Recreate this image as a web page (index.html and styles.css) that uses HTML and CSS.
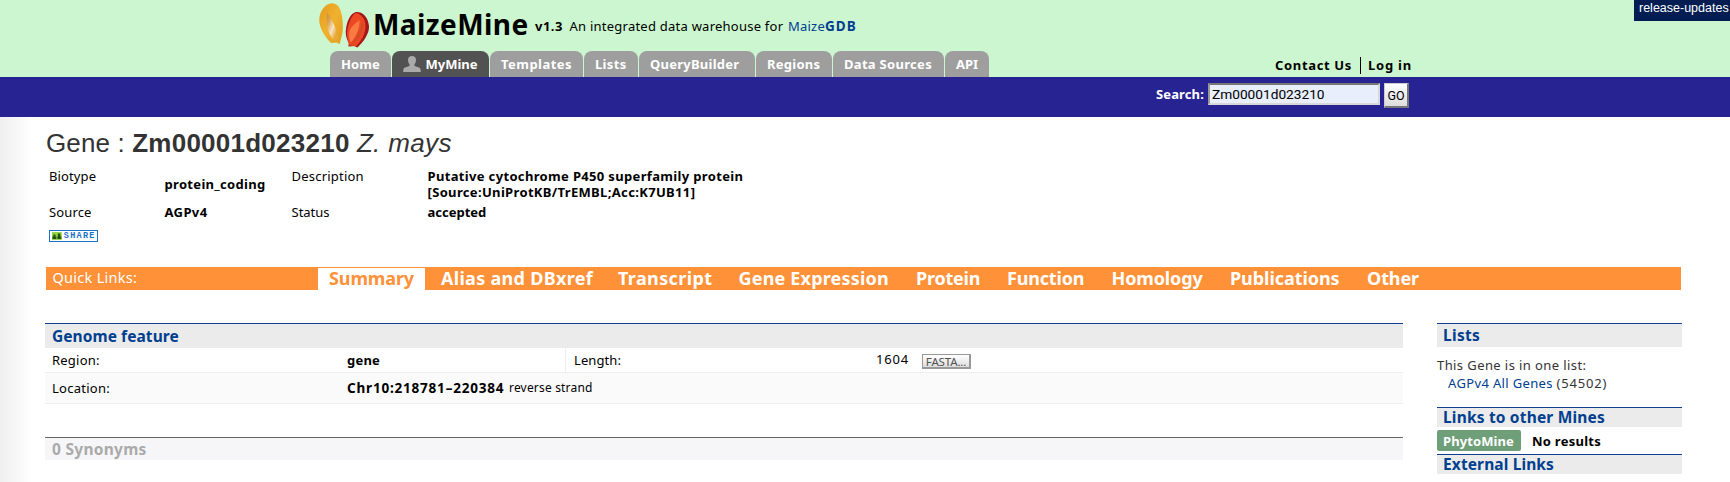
FILE: index.html
```
<!DOCTYPE html>
<html lang="en">
<head>
<meta charset="utf-8">
<title>MaizeMine: Gene Zm00001d023210</title>
<link rel="stylesheet" href="styles.css">
</head>
<body>
<header class="header">
  <div class="brand">
    <svg class="logo" width="52" height="48" viewBox="0 0 52 48">
      <defs>
        <linearGradient id="gold" x1="0" y1="0" x2="1" y2="1"><stop offset="0" stop-color="#e39a1c"/><stop offset=".5" stop-color="#efb22f"/><stop offset="1" stop-color="#e39b1e"/></linearGradient>
        <linearGradient id="shine" x1="0" y1="0" x2="1" y2="1"><stop offset="0" stop-color="#d08c28"/><stop offset=".25" stop-color="#dca250"/><stop offset=".55" stop-color="#f8e4c4"/><stop offset=".8" stop-color="#e8a93a"/></linearGradient>
      </defs>
      <path d="M13 3.3C17 3.3 20.500 6 22 12C24 19 24.500 29 23 35C22.300 38 21.600 40 20.800 44L17.500 42.600L12 43C7 38 2 31 .5 23C-1 14 5 3.500 13 3.300Z" fill="url(#gold)"/>
      <path d="M8 12.500C11 16 18 29 19 37C18.500 40 16.500 41 14.500 40C9 34 6.500 24 8 12.500Z" fill="url(#shine)"/>
      <path d="M37 12C43 11.500 49 16 50 26C50.500 34 44 42 38.500 47.500L35 46L29.500 46.500L29.700 43C27 38 26 33 27.300 27C28.500 20 32 13 37 12Z" fill="#a5161b"/>
      <path d="M37 13C42 14 46.500 19 46.500 26C46.500 34 42 41 37.500 46L30.500 45.500C28 39 27.500 34 28.500 29C30 22 33 14.500 37 13Z" fill="#ee4823"/>
      <path d="M43.500 19C46 28 43 35 36 42L32 44.500C38 37 42 30 43.500 19Z" fill="#cf4c27"/>
      <path d="M40.500 20C41 28 38 35 32 42.500C29.500 38 29.500 32 32 28C35 24 37 23 40.500 20Z" fill="#f97a42"/>
    </svg>
    <h1 class="title">MaizeMine</h1>
    <b class="version">v1.3</b>
    <p class="tagline">An integrated data warehouse for <a class="maize">Maize</a><a class="gdb">GDB</a></p>
  </div>
  <div class="navrow">
    <nav class="tabs">
      <a class="tab home">Home</a>
      <a class="tab mymine"><svg class="user" width="18" height="16" viewBox="0 0 18 16"><path d="M9 0C11.300 0 13 1.500 13 4C13 6 12.300 7.300 11.500 8.200V10L16 11.500C17.300 12 17.800 13 17.800 16H.2C.2 13 .7 12 2 11.500L6.500 10V8.200C5.700 7.300 5 6 5 4C5 1.500 6.700 0 9 0Z" fill="#aaa"/></svg>MyMine</a>
      <a class="tab templates">Templates</a>
      <a class="tab lists-tab">Lists</a>
      <a class="tab query">QueryBuilder</a>
      <a class="tab regions">Regions</a>
      <a class="tab sources">Data Sources</a>
      <a class="tab api">API</a>
    </nav>
    <div class="account"><a class="contact">Contact Us</a><i class="sep"></i><a class="login">Log in</a></div>
  </div>
  <span class="release">release-updates</span>
</header>
<div class="searchbar">
  <label class="search-label">Search:</label>
  <div class="search-input">Zm00001d023210</div>
  <div class="go">GO</div>
</div>
<main class="content">
  <h2 class="gene"><span class="g1">Gene :</span> <b class="g2">Zm00001d023210</b> <i class="g3">Z. mays</i></h2>
  <div class="facts">
    <span class="ls1">Biotype</span><b class="coding">protein_coding</b><span class="ls2">Description</span>
    <b class="desc">Putative cytochrome P450 superfamily protein<br>[Source:UniProtKB/TrEMBL;Acc:K7UB11]</b>
    <span class="ls1">Source</span><b class="ls4">AGPv4</b><span>Status</span><b>accepted</b>
  </div>
  <div class="share"><svg width="10" height="8" viewBox="0 0 10 8"><rect width="10" height="8" fill="#8ed43c"/><path d="M1.500 2.500h2v2h1V7H.5V4.500h1ZM6 1.500h2.500v3h1V7H5.500V4.500H6Z" fill="#27501c"/></svg><span>SHARE</span></div>
  <nav class="quick">
    <span class="ql">Quick Links:</span>
    <a class="q active">Summary</a><a class="q q-alias">Alias and DBxref</a><a class="q q-trans">Transcript</a><a class="q q-expr">Gene Expression</a><a class="q q-prot">Protein</a><a class="q q-func">Function</a><a class="q q-homo">Homology</a><a class="q q-pub">Publications</a><a class="q q-other">Other</a>
  </nav>
  <div class="columns">
    <section class="left">
      <h3 class="head genome">Genome feature</h3>
      <div class="row r1"><span class="k ls2">Region:</span><b class="v ls2">gene</b><span class="len">Length:</span><span class="num">1604</span><span class="fasta">FASTA...</span></div>
      <div class="row r2"><span class="k loc">Location:</span><b class="v chr">Chr10:218781&#8211;220384</b><span class="strand">reverse strand</span></div>
      <h3 class="head syn">0 Synonyms</h3>
    </section>
    <aside class="right">
      <h3 class="head lists">Lists</h3>
      <p class="inlist">This Gene is in one list:</p>
      <p class="agp"><a>AGPv4 All Genes</a> <span>(54502)</span></p>
      <h3 class="head mines">Links to other Mines</h3>
      <div class="phyto"><a class="badge">PhytoMine</a><b class="none">No results</b></div>
      <h3 class="head external">External Links</h3>
    </aside>
  </div>
</main>
</body>
</html>
```
FILE: styles.css
```
*{box-sizing:border-box}
body{margin:0;height:482px;overflow:hidden;background:#fff;color:#000;font:13px/20px "Noto Sans","Open Sans",sans-serif}
h1,h2,h3,p{margin:0;font-weight:normal}
a{color:#00408f;text-decoration:none}
a,b,span,label{white-space:nowrap}

.header{position:relative;height:77px;background:#ccf6cf;display:flex;flex-direction:column}
.brand{height:51px;padding-left:319px;display:flex;align-items:flex-start}
.logo{flex:none;margin-right:1px}
.title{width:163px;padding:4px 0 0 1px;font:bold 28px/40px "Noto Sans",sans-serif;letter-spacing:.42px}
.version{width:34.500px;padding-top:16px;letter-spacing:.5px}
.tagline{padding-top:16px;letter-spacing:.24px;white-space:nowrap}
.maize{margin-left:1px}
.gdb{font-weight:bold;font-size:13.500px;letter-spacing:1px}
.navrow{height:26px;display:flex;padding-left:330px}
.tabs{display:flex;gap:1px;width:945px}
.tab{height:26px;padding-left:11px;border-radius:8px 8px 0 0;background:#9e9e9e;color:#fff;font-weight:bold;line-height:26px;letter-spacing:.25px}
.home{width:61px;letter-spacing:.12px}
.mymine{width:97px;background:#525252;display:flex;letter-spacing:0}
.user{margin:5px 4.500px 0 0}
.templates{width:93px;letter-spacing:.46px}
.lists-tab{width:54px;letter-spacing:.33px}
.query{width:116px}
.regions{width:76px}
.sources{width:111px;letter-spacing:.3px}
.api{width:44px;letter-spacing:0}
.account{display:flex;padding-top:2px;font-weight:bold;line-height:25px}
.account a{color:#000}
.contact{width:85px;letter-spacing:.66px}
.sep{width:1px;height:17px;margin:4px 7px 0 0;background:#000}
.login{letter-spacing:.78px}
.release{position:absolute;top:0;right:0;width:96px;height:21px;padding-left:5px;background:#031d52;color:#fff;font:12.500px/17px "Liberation Sans",Arial,sans-serif}

.searchbar{height:40px;background:#282393;display:flex;padding:6px 0 0 1156px}
.search-label{width:52px;padding-top:1px;color:#fff;font-weight:bold;letter-spacing:.13px}
.search-input{width:172px;height:22px;padding-left:2px;border:2px solid #d8d8d8;border-top-color:#777;border-left-color:#999;background:#e8eefc;font:13.7px/18px Roboto,sans-serif}
.go{width:25px;height:25px;margin-left:4px;border:1px solid #ccc;border-right:2px solid #777;border-bottom:2px solid #777;background:linear-gradient(#fff,#ddd);font:12.500px/24px Roboto,sans-serif;text-align:center}

.content{height:365px;padding-left:45px;background:linear-gradient(90deg,#efefef,#fff 32px)}
.gene{height:49px;padding:11px 0 0 1px;color:#333;font:26px/30px "Liberation Sans",Arial,sans-serif;white-space:nowrap}
.g1{letter-spacing:.15px}
.g2{letter-spacing:.25px}
.g3{letter-spacing:.35px}
.facts{display:grid;grid-template-columns:115.500px 127px 136px auto;grid-template-rows:36px 20px;padding-left:4px;line-height:20px}
.coding{padding-top:8px;letter-spacing:.32px}
.desc{letter-spacing:.34px;line-height:16px;padding-top:2px}
.ls1{letter-spacing:.12px}
.ls2{letter-spacing:.22px}
.ls4{letter-spacing:.38px}
.share{width:49px;height:12px;margin:8px 0 25px 4px;border:1px solid #1c71c9;background:#fff;display:flex;padding:1px 2px}
.share span{margin-left:2px;color:#1c71c9;font:bold 8.500px/9px "Liberation Mono",monospace;letter-spacing:1.300px;width:32px;overflow:hidden}
.quick{width:1635px;height:23px;margin-left:1px;background:#ff9138;color:#fff;display:flex}
.ql{width:272px;padding-left:6.500px;font-size:14.500px;line-height:21px;letter-spacing:.28px}
.q{height:23px;color:#fff;font-weight:bold;font-size:18px;line-height:22px}
.active{width:107px;height:22px;margin:1px 16px 0 0;padding-left:11px;background:#fff;color:#ff9138;line-height:20px;letter-spacing:-.12px}
.q-alias{width:177px;letter-spacing:.3px}
.q-trans{width:120.500px;letter-spacing:.38px}
.q-expr{width:177.500px;letter-spacing:.18px}
.q-prot{width:91px;letter-spacing:-.22px}
.q-func{width:104.500px;letter-spacing:-.18px}
.q-homo{width:118.500px;letter-spacing:-.12px}
.q-pub{width:137px;letter-spacing:-.06px}
.q-other{letter-spacing:-.11px}
.columns{display:flex;gap:34px;padding-top:33px}
.left{width:1358px}
.right{width:245px}
.head{padding-left:7px;border-top:1px solid #11408f;background:#ebebeb;color:#00408f;font-size:15.500px;font-weight:bold}
.genome{height:25px;line-height:24px;letter-spacing:.07px}
.row{display:flex;padding-left:7px;border-bottom:1px solid #ededed}
.r1{height:25px;line-height:25px}
.k{width:295px}
.v{width:162px}
.chr{letter-spacing:.8px;font-size:13.500px}
.r1 .v{width:218px}
.len{width:311px;height:24px;padding-left:8px;border-left:1px solid #ededed;letter-spacing:.09px}
.num{width:46px;line-height:23px;letter-spacing:.81px}
.fasta{width:49px;height:15px;margin-top:6px;border:1px solid #999;border-right-width:2px;border-bottom-width:2px;background:linear-gradient(#fff,#ddd);color:#555;font:11.500px/13px "Noto Sans",sans-serif;letter-spacing:-.15px;text-align:center}
.r2{height:31px;background:#fafafa;line-height:30px}
.loc{letter-spacing:.26px}
.strand{font-size:12px;letter-spacing:.18px}
.syn{height:24px;margin-top:33px;border-color:#666;background:#f6f6f8;color:#aaa;line-height:22px;height:23px;letter-spacing:.28px}
.lists{height:24px;line-height:22px;padding-left:6px;letter-spacing:.3px}
.inlist{padding-top:8px;color:#333;letter-spacing:.41px;line-height:20px}
.agp{padding-left:11px;height:32px;color:#333;letter-spacing:.35px;line-height:17px}
.agp span{letter-spacing:.82px}
.mines{height:20px;line-height:19px;padding-left:6px;letter-spacing:.18px}
.phyto{display:flex;height:27px;padding-top:3px;line-height:22px}
.badge{width:84px;height:21px;margin-right:11px;padding-left:6px;border-radius:2px;background:#6e9f78;color:#fff;font-weight:bold;letter-spacing:.1px}
.none{letter-spacing:.26px}
.external{height:20px;line-height:19px;padding-left:6px;letter-spacing:.12px}
```
